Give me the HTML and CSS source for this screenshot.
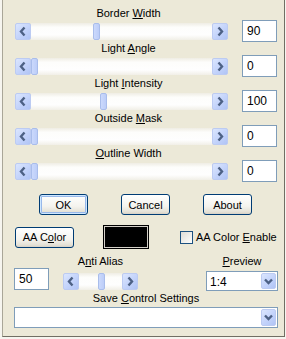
FILE: index.html
```html
<!DOCTYPE html>
<html lang="en">

<head>
    <meta charset="UTF-8">
    <title>Light Effect Settings</title>
    <link rel="stylesheet" href="styles.css">
</head>

<body>
    <div class="win">
        <div class="sliders">
            <div class="row">
                <div class="cap">Border <u>W</u>idth</div>
                <div class="scroll">
                    <span class="arrow"><svg width="16" height="17"><path d="M9.5 4.5 L6 8.5 L9.5 12.5" /></svg></span>
                    <div class="track"><span class="thumb" style="left: 62px"></span></div>
                    <span class="arrow"><svg width="16" height="17"><path d="M6.5 4.5 L10 8.5 L6.5 12.5" /></svg></span>
                </div>
                <div class="edit">90</div>
            </div>
            <div class="row">
                <div class="cap">Light <u>A</u>ngle</div>
                <div class="scroll">
                    <span class="arrow"><svg width="16" height="17"><path d="M9.5 4.5 L6 8.5 L9.5 12.5" /></svg></span>
                    <div class="track"><span class="thumb" style="left: 0px"></span></div>
                    <span class="arrow"><svg width="16" height="17"><path d="M6.5 4.5 L10 8.5 L6.5 12.5" /></svg></span>
                </div>
                <div class="edit">0</div>
            </div>
            <div class="row">
                <div class="cap">Light <u>I</u>ntensity</div>
                <div class="scroll">
                    <span class="arrow"><svg width="16" height="17"><path d="M9.5 4.5 L6 8.5 L9.5 12.5" /></svg></span>
                    <div class="track"><span class="thumb" style="left: 69px"></span></div>
                    <span class="arrow"><svg width="16" height="17"><path d="M6.5 4.5 L10 8.5 L6.5 12.5" /></svg></span>
                </div>
                <div class="edit">100</div>
            </div>
            <div class="row">
                <div class="cap">Outside <u>M</u>ask</div>
                <div class="scroll">
                    <span class="arrow"><svg width="16" height="17"><path d="M9.5 4.5 L6 8.5 L9.5 12.5" /></svg></span>
                    <div class="track"><span class="thumb" style="left: 0px"></span></div>
                    <span class="arrow"><svg width="16" height="17"><path d="M6.5 4.5 L10 8.5 L6.5 12.5" /></svg></span>
                </div>
                <div class="edit">0</div>
            </div>
            <div class="row">
                <div class="cap"><u>O</u>utline Width</div>
                <div class="scroll">
                    <span class="arrow"><svg width="16" height="17"><path d="M9.5 4.5 L6 8.5 L9.5 12.5" /></svg></span>
                    <div class="track"><span class="thumb" style="left: 0px"></span></div>
                    <span class="arrow"><svg width="16" height="17"><path d="M6.5 4.5 L10 8.5 L6.5 12.5" /></svg></span>
                </div>
                <div class="edit">0</div>
            </div>
        </div>

        <div class="actions">
            <button class="btn default">OK</button>
            <button class="btn">Cancel</button>
            <button class="btn">About</button>
        </div>

        <div class="color-row">
            <button class="btn aa">AA C<u>o</u>lor</button>
            <div class="swatch"></div>
            <span class="check"></span>
            <span class="check-label">AA Color <u>E</u>nable</span>
        </div>

        <div class="aa-row">
            <div class="edit small">50</div>
            <div class="aa-group">
                <div class="cap">A<u>n</u>ti Alias</div>
                <div class="scroll mini">
                    <span class="arrow"><svg width="16" height="17"><path d="M9.5 4.5 L6 8.5 L9.5 12.5" /></svg></span>
                    <div class="track"><span class="thumb" style="left: 19px"></span></div>
                    <span class="arrow"><svg width="16" height="17"><path d="M6.5 4.5 L10 8.5 L6.5 12.5" /></svg></span>
                </div>
            </div>
            <div class="preview-group">
                <div class="cap"><u>P</u>review</div>
                <div class="combo preview">
                    <span class="combo-text">1:4</span>
                    <span class="drop"><svg width="15" height="17"><path d="M4 6.5 L7.5 10 L11 6.5" /></svg></span>
                </div>
            </div>
        </div>

        <div class="save">
            <div class="cap">Save <u>C</u>ontrol Settings</div>
            <div class="combo">
                <span class="combo-text"></span>
                <span class="drop"><svg width="15" height="17"><path d="M4 6.5 L7.5 10 L11 6.5" /></svg></span>
            </div>
        </div>
    </div>
</body>

</html>
```

FILE: styles.css
```css
body {
    margin: 0;
    background-color: #f6f5ef;
    font-family: "Liberation Sans", Arial, sans-serif;
    font-size: 11px;
    color: #000;
}

.win {
    box-sizing: border-box;
    margin-left: 2px;
    width: 283px;
    height: 337px;
    padding-top: 7px;
    background-color: #ece9d8;
    border-left: 1px solid #a9a698;
    border-right: 1px solid #716f64;
    border-bottom: 1px solid #716f64;
}

u {
    text-decoration: underline;
    text-underline-offset: 1px;
}

.cap {
    height: 13px;
    line-height: 13px;
    text-align: center;
    white-space: nowrap;
}

/* slider rows */
.sliders {
    padding-left: 12px;
}

.row {
    display: grid;
    grid-template-columns: 227px 35px;
    grid-template-rows: 13px 22px;
}

.row .cap {
    grid-column: 1;
}

.row .scroll {
    grid-column: 1;
    grid-row: 2;
    align-self: center;
    width: 213px;
}

.row .edit {
    grid-column: 2;
    grid-row: 2;
}

.scroll {
    display: flex;
    height: 17px;
}

.arrow {
    box-sizing: border-box;
    width: 16px;
    height: 17px;
    flex: none;
    border: 1px solid #bccbf2;
    border-radius: 2px;
    background: linear-gradient(135deg, #dbe6fe 0%, #c3d3fb 55%, #b0c4f5 100%);
}

.arrow svg,
.drop svg {
    display: block;
    margin: -1px;
}

.arrow path,
.drop path {
    fill: none;
    stroke: #4d6185;
    stroke-width: 2.4;
}

.track {
    position: relative;
    flex: 1;
    background: linear-gradient(#efede4 0%, #fdfdfb 25%, #fefefe 70%, #f1efe7 100%);
}

.thumb {
    position: absolute;
    top: 0;
    box-sizing: border-box;
    width: 7px;
    height: 17px;
    border: 1px solid #a9bdeb;
    border-radius: 2px;
    background: linear-gradient(90deg, #cbd9fc, #bccdf8);
}

.edit {
    box-sizing: border-box;
    height: 22px;
    padding: 4px 0 0 4px;
    border: 1px solid #7f9db9;
    background-color: #fff;
    font-size: 12px;
    line-height: 13px;
}

/* buttons */
.actions {
    display: flex;
    gap: 33px;
    margin-top: 12px;
    padding-left: 36px;
}

.btn {
    box-sizing: border-box;
    width: 49px;
    height: 21px;
    padding: 0;
    border: 1px solid #003c74;
    border-radius: 3px;
    background: linear-gradient(#ffffff 0%, #f4f3ee 60%, #e3e0d5 90%, #d6d0c5 100%);
    font-family: inherit;
    font-size: 11px;
    color: #000;
}

.btn.default {
    box-shadow: inset 0 0 0 1px #cee7ff, inset 0 0 0 2px #98b8ea;
}

.color-row {
    display: flex;
    align-items: center;
    height: 24px;
    margin-top: 10px;
    padding-left: 12px;
}

.btn.aa {
    width: 59px;
}

.swatch {
    box-sizing: border-box;
    width: 46px;
    height: 24px;
    margin-left: 29px;
    border: 1px solid #000;
    box-shadow: inset 0 0 0 1px #d4d0c8;
    background-color: #000;
}

.check {
    box-sizing: border-box;
    flex: none;
    width: 13px;
    height: 13px;
    margin-left: 31px;
    border: 1px solid #1c5180;
    background: linear-gradient(135deg, #dcdbd5, #f7f7f5 80%, #fff);
}

.check-label {
    margin-left: 3px;
    white-space: nowrap;
}

/* anti alias + preview */
.aa-row {
    display: flex;
    padding: 0 6px 0 11px;
    margin-top: 6px;
}

.edit.small {
    width: 35px;
    margin-top: 13px;
}

.aa-group {
    width: 75px;
    margin-left: 14px;
}

.scroll.mini {
    margin-top: 5px;
}

.preview-group {
    width: 72px;
    margin-left: auto;
}

.combo {
    box-sizing: border-box;
    display: flex;
    height: 21px;
    padding: 1px;
    border: 1px solid #7f9db9;
    background-color: #fff;
}

.combo.preview {
    margin-top: 3px;
    height: 20px;
}

.combo-text {
    flex: 1;
    padding: 2px 0 0 2px;
    font-size: 12px;
}

.drop {
    box-sizing: border-box;
    width: 15px;
    flex: none;
    border: 1px solid #bccbf2;
    border-radius: 2px;
    background: linear-gradient(135deg, #dbe6fe 0%, #c3d3fb 55%, #b0c4f5 100%);
}

.save {
    margin-top: 1px;
    padding: 0 6px 0 11px;
}

.save .combo {
    margin-top: 2px;
}
```
